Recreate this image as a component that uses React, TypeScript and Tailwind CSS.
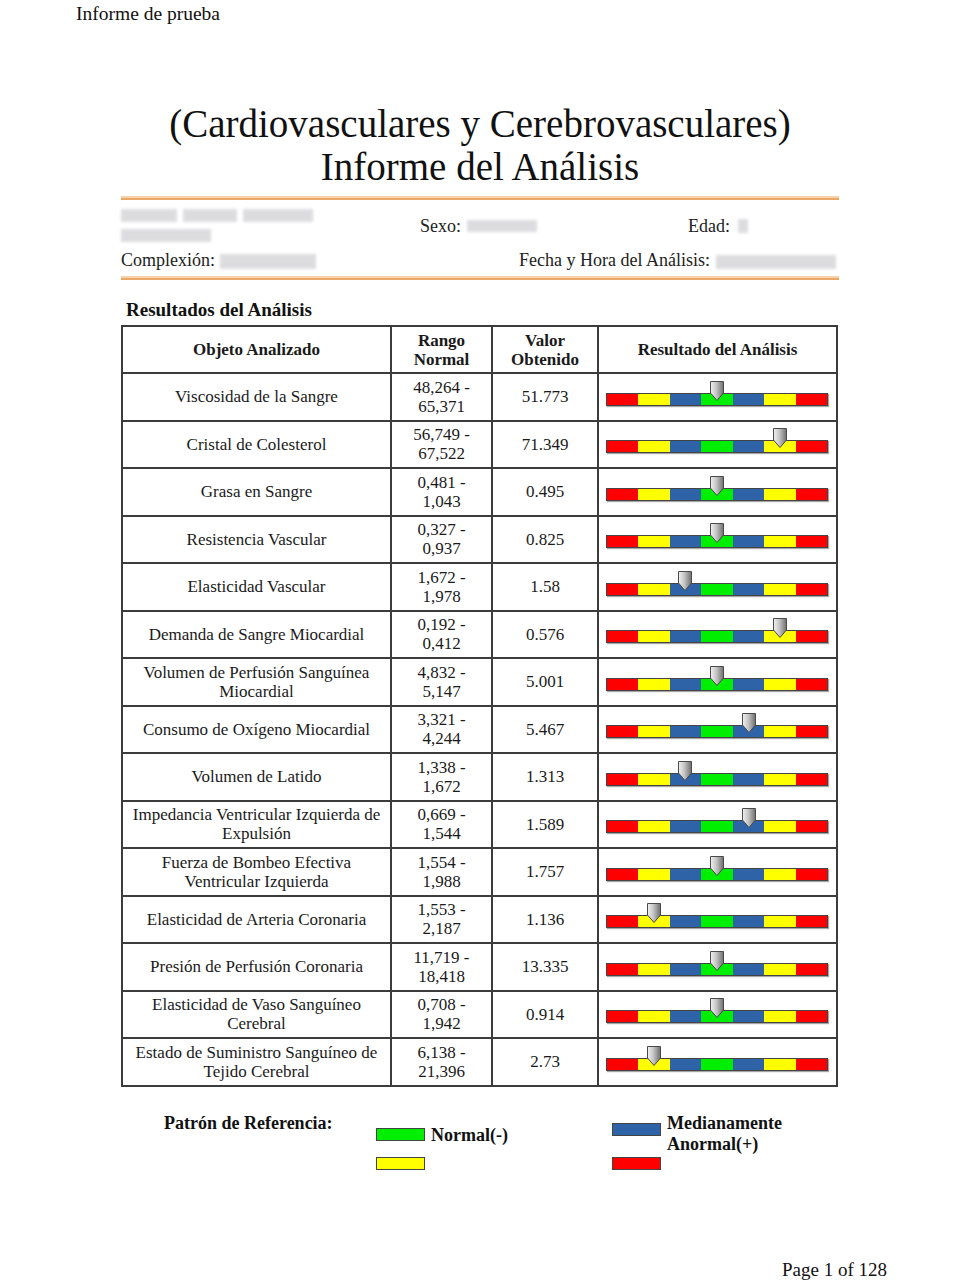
import React from "react";

type Row = {
  name: React.ReactNode;
  lo: string;
  hi: string;
  value: string;
  seg: number;
};

const rows: Row[] = [
  { name: "Viscosidad de la Sangre", lo: "48,264 -", hi: "65,371", value: "51.773", seg: 3 },
  { name: "Cristal de Colesterol", lo: "56,749 -", hi: "67,522", value: "71.349", seg: 5 },
  { name: "Grasa en Sangre", lo: "0,481 -", hi: "1,043", value: "0.495", seg: 3 },
  { name: "Resistencia Vascular", lo: "0,327 -", hi: "0,937", value: "0.825", seg: 3 },
  { name: "Elasticidad Vascular", lo: "1,672 -", hi: "1,978", value: "1.58", seg: 2 },
  { name: "Demanda de Sangre Miocardial", lo: "0,192 -", hi: "0,412", value: "0.576", seg: 5 },
  { name: <>Volumen de Perfusión Sanguínea<br />Miocardial</>, lo: "4,832 -", hi: "5,147", value: "5.001", seg: 3 },
  { name: "Consumo de Oxígeno Miocardial", lo: "3,321 -", hi: "4,244", value: "5.467", seg: 4 },
  { name: "Volumen de Latido", lo: "1,338 -", hi: "1,672", value: "1.313", seg: 2 },
  { name: <>Impedancia Ventricular Izquierda de<br />Expulsión</>, lo: "0,669 -", hi: "1,544", value: "1.589", seg: 4 },
  { name: <>Fuerza de Bombeo Efectiva<br />Ventricular Izquierda</>, lo: "1,554 -", hi: "1,988", value: "1.757", seg: 3 },
  { name: "Elasticidad de Arteria Coronaria", lo: "1,553 -", hi: "2,187", value: "1.136", seg: 1 },
  { name: "Presión de Perfusión Coronaria", lo: "11,719 -", hi: "18,418", value: "13.335", seg: 3 },
  { name: <>Elasticidad de Vaso Sanguíneo<br />Cerebral</>, lo: "0,708 -", hi: "1,942", value: "0.914", seg: 3 },
  { name: <>Estado de Suministro Sanguíneo de<br />Tejido Cerebral</>, lo: "6,138 -", hi: "21,396", value: "2.73", seg: 1 },
];

const segColors = ["bg-[#ff0000]", "bg-[#ffff00]", "bg-[#2e63a8]", "bg-[#00ee00]", "bg-[#2e63a8]", "bg-[#ffff00]", "bg-[#ff0000]"];

function Marker() {
  return (
    <svg width="16" height="22" viewBox="0 0 16 22" className="block">
      <defs>
        <linearGradient id="mk" x1="0" x2="1" y1="0" y2="0">
          <stop offset="0" stopColor="#f2f2f2" />
          <stop offset="0.45" stopColor="#c4c4c4" />
          <stop offset="1" stopColor="#6e6e6e" />
        </linearGradient>
      </defs>
      <path d="M1.5 1.5 H14.5 V13 L8 20.5 L1.5 13 Z" fill="url(#mk)" stroke="#4a4a4a" strokeWidth="1" />
    </svg>
  );
}

function ScaleBar({ seg }: { seg: number }) {
  return (
    <div className="relative w-[222px] h-[13px] ml-[7px] mt-[5px]">
      <div className="flex h-full border border-[#444] shadow-[1px_1px_1px_rgba(0,0,0,0.35)]">
        {segColors.map((c, i) => (
          <div key={i} className={`${c} flex-1 h-full`} />
        ))}
      </div>
      <div className="absolute top-[-13px]" style={{ left: `${(seg + 0.5) * (222 / 7) - 8}px` }}>
        <Marker />
      </div>
    </div>
  );
}

function Blur({ w, h = 13 }: { w: number; h?: number }) {
  return (
    <span
      className="inline-block align-middle bg-[#d4d4d8] blur-[1.5px] opacity-80"
      style={{ width: `${w}px`, height: `${h}px` }}
    />
  );
}

export default function App() {
  const serif = "font-['Liberation_Serif','Times_New_Roman',serif]";
  return (
    <div className={`${serif} bg-white text-[#111] w-[960px] h-[1280px] flex flex-col`}>
      <div className="pl-[76px] pt-[2px] text-[19.5px] leading-[24px]">Informe de prueba</div>

      <div className="mt-[76px] text-center text-[39px] leading-[43px]">
        <div>(Cardiovasculares y Cerebrovasculares)</div>
        <div>Informe del Análisis</div>
      </div>

      <div className="mx-[121px] mt-[8px]">
        <div className="h-[4px] border-t-[2px] border-[#f6d3ad] bg-[#e9a866]" />

        <div className="grid grid-cols-[299px_268px_1fr] text-[18px] leading-[20px] text-[#222] pt-[8px]">
          <div className="flex flex-col gap-[7px] pt-[1px]">
            <div className="flex gap-[6px]">
              <Blur w={56} />
              <Blur w={54} />
              <Blur w={70} />
            </div>
            <Blur w={90} />
          </div>
          <div className="pt-[8px] flex items-center gap-[6px] self-start">
            <span>Sexo:</span>
            <Blur w={70} h={12} />
          </div>
          <div className="pt-[8px] flex items-center gap-[8px] self-start">
            <span>Edad:</span>
            <Blur w={10} h={14} />
          </div>
        </div>

        <div className="flex items-center whitespace-nowrap text-[18px] leading-[20px] text-[#222] mt-[8px]">
          <span className="shrink-0">Complexión:</span>
          <span className="ml-[5px] shrink-0"><Blur w={96} h={15} /></span>
          <span className="ml-[203px] shrink-0">Fecha y Hora del Análisis:</span>
          <span className="ml-[6px] shrink-0"><Blur w={120} h={14} /></span>
        </div>

        <div className="h-[4px] mt-[6px] border-t-[2px] border-[#f6d3ad] bg-[#e9a866]" />

        <div className="mt-[19px] pl-[5px] text-[19px] leading-[22px] font-bold">Resultados del Análisis</div>

        <table className="mt-[4px] border-collapse text-[17px] leading-[19px] text-[#1a1a1a] w-[715px] table-fixed">
          <colgroup>
            <col className="w-[269px]" />
            <col className="w-[101px]" />
            <col className="w-[106px]" />
            <col className="w-[239px]" />
          </colgroup>
          <thead>
            <tr className="h-[47px] font-bold">
              <th className="border-2 border-[#3c3c3c] text-center">Objeto Analizado</th>
              <th className="border-2 border-[#3c3c3c] text-center">Rango<br />Normal</th>
              <th className="border-2 border-[#3c3c3c] text-center">Valor<br />Obtenido</th>
              <th className="border-2 border-[#3c3c3c] text-center">Resultado del Análisis</th>
            </tr>
          </thead>
          <tbody>
            {rows.map((r, i) => (
              <tr key={i} className="h-[47.5px]">
                <td className="border-2 border-[#3c3c3c] text-center px-1">{r.name}</td>
                <td className="border-2 border-[#3c3c3c] text-center">{r.lo}<br />{r.hi}</td>
                <td className="border-2 border-[#3c3c3c] text-center">{r.value}</td>
                <td className="border-2 border-[#3c3c3c] p-0 align-middle">
                  <ScaleBar seg={r.seg} />
                </td>
              </tr>
            ))}
          </tbody>
        </table>
      </div>

      <div className="mt-[26px] pl-[164px] grid grid-cols-[212px_236px_1fr] font-bold text-[18px] leading-[21px] text-[#111]">
        <div>Patrón de Referencia:</div>
        <div className="flex flex-col gap-[11px] pt-[10px]">
          <div className="flex items-center gap-[6px]">
            <span className="w-[49px] h-[13px] bg-[#00ee00] border border-[#444]" />
            <span className="mt-[2px]">Normal(-)</span>
          </div>
          <span className="w-[49px] h-[13px] bg-[#ffff00] border border-[#444]" />
        </div>
        <div className="flex flex-col gap-[17px]">
          <div className="flex items-start gap-[6px]">
            <span className="w-[49px] h-[13px] mt-[10px] bg-[#2e63a8] border border-[#444]" />
            <span>Medianamente<br />Anormal(+)</span>
          </div>
          <span className="-mt-[15px] w-[49px] h-[13px] bg-[#ff0000] border border-[#444]" />
        </div>
      </div>

      <div className="mt-auto pr-[73px] text-right text-[19px] leading-[20px]">Page 1 of 128</div>
    </div>
  );
}
